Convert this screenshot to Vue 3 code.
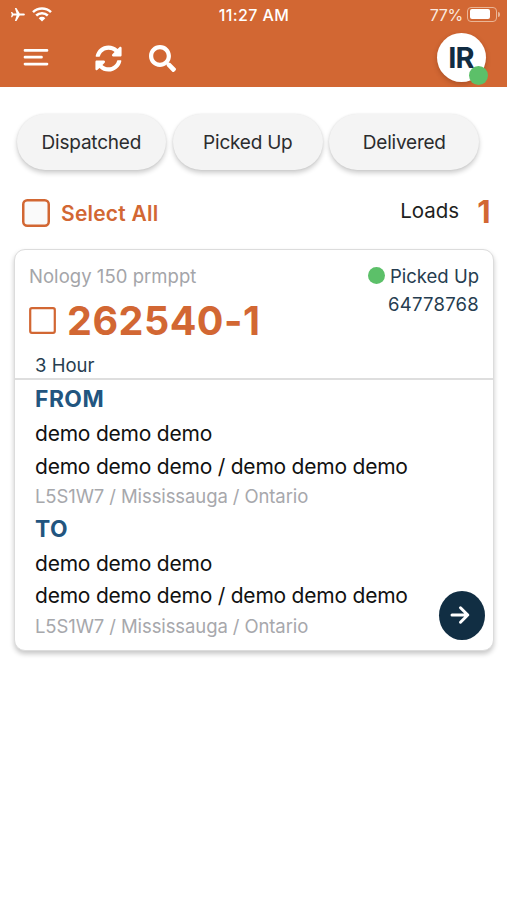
<script setup>
const filters = ['Dispatched', 'Picked Up', 'Delivered']
const stops = [
  { kind: 'FROM', name: 'demo demo demo', address: 'demo demo demo / demo demo demo', city: 'L5S1W7 / Mississauga / Ontario' },
  { kind: 'TO', name: 'demo demo demo', address: 'demo demo demo / demo demo demo', city: 'L5S1W7 / Mississauga / Ontario' },
]
</script>

<template>
  <div class="screen">
    <header class="top">
      <div class="status">
        <div class="radios">
          <svg class="plane" viewBox="0 0 24 24"><path d="M23 12c0-1-1-1.700-2.200-1.700h-6L9.500 1.500H7l2.700 8.800H4.500L2.600 7.800H.800L2 12 .800 16.200h1.800l1.900-2.500h5.200L7 22.500h2.500l5.300-8.800h6C22 13.700 23 13 23 12z" fill="#fff" /></svg>
          <svg class="wifi" viewBox="0 0 20 15" fill="none" stroke="#fff" stroke-width="2.500"><path d="M1 5.100a13 13 0 0 1 18 0M4.200 8.500a8.400 8.400 0 0 1 11.600 0" /><path d="M10 14.500 6.700 11.200a4.700 4.700 0 0 1 6.600 0z" fill="#fff" stroke="none" /></svg>
        </div>
        <span class="time">11:27 AM</span>
        <div class="power">
          <span class="percent">77%</span>
          <span class="battery"><span class="charge"></span></span>
          <span class="cap"></span>
        </div>
      </div>
      <div class="bar">
        <svg class="menu" viewBox="0 0 26 20" stroke="#fff" stroke-width="2.700" stroke-linecap="round"><path d="M2 2.400h22M2 9.200h16.500M2 16.100h22" /></svg>
        <svg class="sync" viewBox="0 0 512 512" fill="#fff"><path d="M370.720 133.280C339.458 104.008 298.888 87.962 255.848 88c-77.458.068-144.328 53.178-162.791 126.850-1.344 5.363-6.122 9.150-11.651 9.150H24.103c-7.498 0-13.194-6.807-11.807-14.176C33.933 94.924 134.813 8 256 8c66.448 0 126.791 26.136 171.315 68.685L463.030 40.970C478.149 25.851 504 36.559 504 57.941V192c0 13.255-10.745 24-24 24H345.941c-21.382 0-32.090-25.851-16.971-40.971l41.750-41.749zM32 296h134.059c21.382 0 32.090 25.851 16.971 40.971l-41.750 41.750c31.262 29.273 71.835 45.319 114.876 45.280 77.418-.070 144.315-53.144 162.787-126.849 1.344-5.363 6.122-9.150 11.651-9.150h57.304c7.498 0 13.194 6.807 11.807 14.176C478.067 417.076 377.187 504 256 504c-66.448 0-126.791-26.136-171.315-68.685L48.970 471.030C33.851 486.149 8 475.441 8 454.059V320c0-13.255 10.745-24 24-24z" /></svg>
        <svg class="search" viewBox="0 0 512 512" fill="#fff"><path d="M505 442.700L405.300 343c-4.500-4.500-10.600-7-17-7H372c27.600-35.300 44-79.700 44-128C416 93.100 322.900 0 208 0S0 93.100 0 208s93.100 208 208 208c48.300 0 92.700-16.400 128-44v16.300c0 6.400 2.500 12.500 7 17l99.700 99.700c9.400 9.400 24.600 9.400 33.900 0l28.300-28.300c9.400-9.400 9.400-24.600.1-34zM208 336c-70.700 0-128-57.200-128-128 0-70.700 57.200-128 128-128 70.700 0 128 57.200 128 128 0 70.700-57.200 128-128 128z" /></svg>
        <div class="avatar"><span class="initials">IR</span><span class="online"></span></div>
      </div>
    </header>

    <nav class="filters">
      <button v-for="f in filters" :key="f" class="pill">{{ f }}</button>
    </nav>

    <div class="summary">
      <svg class="box" viewBox="0 0 28 28" fill="#fafafa" stroke="#d26733" stroke-width="2.500"><rect x="1.250" y="1.250" width="25.500" height="25.500" rx="4" /></svg>
      <span class="select-all">Select All</span>
      <span class="loads">Loads</span>
      <span class="count">1</span>
    </div>

    <article class="card">
      <div class="head">
        <div class="row">
          <span class="client">Nology 150 prmppt</span>
          <span class="state"><i class="dot"></i><span>Picked Up</span></span>
        </div>
        <div class="row order">
          <span class="order-id">
            <svg class="box small" viewBox="0 0 28 28" fill="#fff" stroke="#d26733" stroke-width="2.300"><rect x="1.250" y="1.250" width="25.500" height="25.500" rx="1.800" /></svg>
            <span class="number">262540-1</span>
          </span>
          <span class="ref">64778768</span>
        </div>
        <div class="service">3 Hour</div>
      </div>
      <div class="body">
        <section v-for="s in stops" :key="s.kind" class="stop">
          <h2 class="kind">{{ s.kind }}</h2>
          <p class="line">{{ s.name }}</p>
          <p class="line">{{ s.address }}</p>
          <p class="city">{{ s.city }}</p>
        </section>
        <button class="go" aria-label="Open">
          <svg viewBox="0 0 20 20" fill="none" stroke="#fff" stroke-width="3" stroke-linecap="round" stroke-linejoin="round"><path d="M2 10h15.500M10.500 2.800 17.800 10l-7.300 7.200" /></svg>
        </button>
      </div>
    </article>
  </div>
</template>

<style>
body { background: #fff; }
</style>

<style scoped>
.screen { box-sizing: border-box; width: 507px; height: 900px; overflow: hidden; background: #fff; font-family: Inter, "Liberation Sans", sans-serif; color: #1e1f21; }
.screen * { box-sizing: border-box; }
button { border: 0; font-family: inherit; padding: 0; }
h2, p { margin: 0; }
.top { height: 87px; background: #d26733; color: #fff; }
.status { height: 30px; display: grid; grid-template-columns: 1fr auto 1fr; align-items: center; padding: 0 7px 0 10px; }
.radios { display: flex; align-items: center; gap: 6px; margin-bottom: 1px; }
.plane { width: 16px; height: 15px; }
.wifi { width: 20px; height: 15px; }
.time { font-size: 16px; font-weight: 500; line-height: 30px; letter-spacing: .4px; margin-right: 2px; }
.power { display: flex; justify-content: flex-end; align-items: center; color: #fbe9df; }
.percent { font-size: 16px; line-height: 30px; margin-right: 4px; letter-spacing: -.3px; }
.battery { width: 30px; height: 15px; border: 1px solid #eab596; border-radius: 4px; padding: 1.500px; display: flex; margin-bottom: 2px; }
.charge { width: 20px; background: #fff; border-radius: 2px; }
.cap { width: 2px; height: 5px; margin: 0 0 2px 1px; background: #eab596; border-radius: 0 2px 2px 0; }
.bar { height: 57px; display: flex; align-items: center; padding: 0 21px 1px 22.500px; }
.menu { width: 26px; height: 20px; }
.sync { width: 27px; height: 27px; margin-left: 46.500px; margin-top: 1px; }
.search { width: 27px; height: 27px; margin-left: 27px; margin-top: 1px; }
.avatar { position: relative; margin-left: auto; margin-bottom: 1px; width: 49px; height: 49px; border-radius: 50%; background: #fff; display: flex; align-items: center; justify-content: center; box-shadow: 0 2px 5px rgba(80, 30, 5, .3); }
.initials { color: #112c42; font-size: 29px; font-weight: 700; line-height: 49px; letter-spacing: -.8px; padding-right: 1px; }
.online { position: absolute; right: -2px; bottom: -3px; width: 19px; height: 19px; border-radius: 50%; background: #5cc069; }
.filters { display: flex; gap: 6.800px; padding: 27px 0 0 16.500px; }
.pill { width: 149.700px; height: 56px; border-radius: 28px; background: #f4f4f4; color: #2b2c2e; font-size: 19px; line-height: 56px; padding-top: 1px; letter-spacing: -.22px; box-shadow: 0 3px 5px rgba(0, 0, 0, .2), 0 0 2px rgba(0, 0, 0, .08); }
.summary { height: 79px; padding: 6px 16.500px 0 22px; display: flex; align-items: center; }
.box { flex: none; width: 28px; height: 28px; }
.select-all { margin-left: 11px; margin-top: 2px; font-size: 21px; font-weight: 600; color: #d26733; letter-spacing: .22px; }
.loads { margin-left: auto; font-size: 20.500px; margin-bottom: 4px; }
.count { font-size: 31px; font-weight: 700; color: #d26733; margin: 0 0 3px 18px; }
.card { margin: 0 13px 0 14px; height: 402px; border: 1px solid #dcdcdc; border-radius: 11px; background: #fff; box-shadow: 0 3px 5px rgba(0, 0, 0, .22); }
.head { height: 130px; border-bottom: 2px solid #dedede; padding: 11px 14px 0 14px; color: #263d50; font-size: 18.500px; }
.row { display: flex; justify-content: space-between; height: 30px; line-height: 30px; }
.client { color: #a4a5a9; letter-spacing: .04px; }
.state { display: flex; align-items: center; }
.dot { width: 17px; height: 17px; border-radius: 50%; background: #5cc069; margin-right: 5px; margin-bottom: 2px; }
.order { height: 60px; }
.order-id { display: flex; align-items: center; }
.small { width: 27px; height: 27px; margin-bottom: 1px; }
.number { margin-left: 11px; font-size: 39.500px; font-weight: 700; color: #d26733; line-height: 60px; letter-spacing: .5px; }
.ref { line-height: 26px; letter-spacing: .25px; }
.service { padding-left: 6px; line-height: 28px; }
.body { position: relative; padding: 3px 0 0 20px; }
.stop { height: 129.700px; }
.kind { height: 32px; line-height: 32px; font-size: 22.800px; font-weight: 700; color: #22557f; letter-spacing: .5px; }
.line { height: 32.500px; line-height: 38px; font-size: 21px; color: #111; white-space: nowrap; letter-spacing: -.22px; }
.city { height: 32px; line-height: 32px; font-size: 18.500px; color: #a7a8ac; letter-spacing: -.1px; }
.go { position: absolute; right: 8.500px; top: 210.500px; width: 46px; height: 49px; border-radius: 50%; background: #112e43; display: flex; align-items: center; justify-content: center; }
.go svg { width: 20px; height: 20px; margin-right: 3px; }
</style>
